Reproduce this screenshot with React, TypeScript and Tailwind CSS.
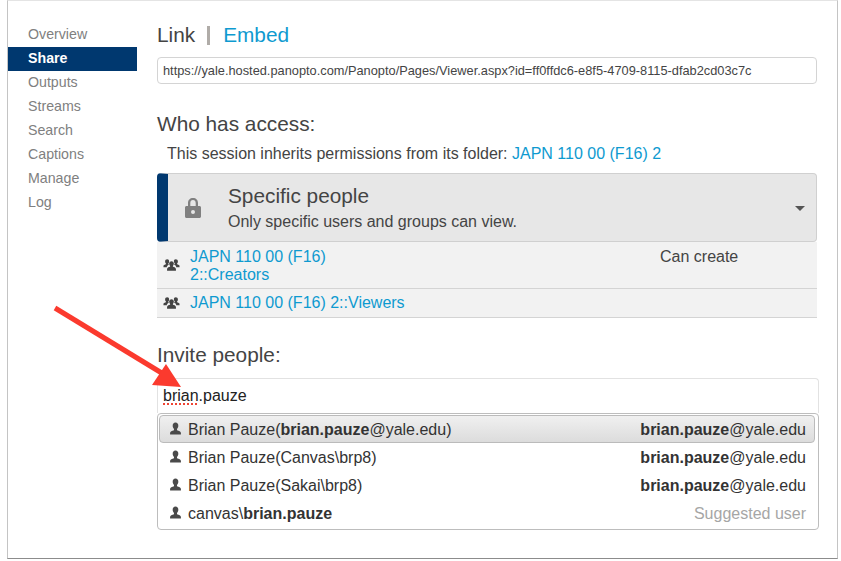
import React from 'react';

const navItems = ['Overview', 'Share', 'Outputs', 'Streams', 'Search', 'Captions', 'Manage', 'Log'];

const Person = () => (
  <svg viewBox="0 0 12 12" className="-mt-[2px] h-[13px] w-[13px] shrink-0 fill-[#4a4a4a]">
    <path d="M6 .5c1.700 0 2.600 1.200 2.600 2.900 0 1.300-.5 2.300-1.200 3v1.100c1.800.6 3.600 1.100 3.600 2.600v1.400H1V10.100c0-1.500 1.800-2 3.600-2.600V6.400c-.7-.7-1.200-1.700-1.200-3C3.400 1.700 4.300.5 6 .5z" />
  </svg>
);

const Group = () => (
  <svg viewBox="0 0 18 14" className="h-[14px] w-[17px] shrink-0 fill-[#444]">
    <path d="M4.500 1c1.300 0 2 .9 2 2.200 0 1-.4 1.700-.9 2.200v.8l.9.3C5 7.200 4 8 4 9.500H.5V8c0-1 1.300-1.400 2.600-1.800v-.8c-.5-.5-.9-1.200-.9-2.200C2.200 1.900 3.200 1 4.500 1zM13.500 1c1.300 0 2.300.9 2.300 2.200 0 1-.4 1.700-.9 2.200v.8c1.300.4 2.600.8 2.600 1.800v1.500H14c0-1.500-1-2.300-2.500-3.200l.9-.3v-.8c-.5-.5-.9-1.200-.9-2.200 0-1.300.7-2.200 2-2.200z" />
    <path d="M9 3c1.500 0 2.500 1 2.500 2.500 0 1.100-.4 1.900-1 2.500v.9c1.600.5 3.200 1 3.200 2.300V13H4.300v-1.800c0-1.300 1.600-1.800 3.200-2.300V8c-.6-.6-1-1.400-1-2.500C6.500 4 7.500 3 9 3z" />
  </svg>
);

const LockIcon = () => (
  <svg viewBox="0 0 16 20" className="ml-[17px] h-[20px] w-[16px] shrink-0">
    <path
      fillRule="evenodd"
      fill="#808080"
      d="M8 0c3 0 5 2 5 5v3h1.500c.8 0 1.500.7 1.500 1.500v9c0 .8-.7 1.500-1.500 1.500h-13C.7 20 0 19.300 0 18.500v-9C0 8.700.7 8 1.500 8H3V5c0-3 2-5 5-5zm0 2C6.300 2 5.300 3.300 5.300 5v3h5.400V5c0-1.700-1-3-2.700-3zM8 12a2 2 0 100 4 2 2 0 000-4z"
    />
  </svg>
);

const Suggestion = ({ name, right, active }: { name: React.ReactNode; right: React.ReactNode; active?: boolean }) => (
  <div
    className={`flex h-[28px] items-center justify-between pl-[9px] pr-[8px] pt-[1px] ${
      active ? 'rounded-[4px] border border-[#bbb] bg-gradient-to-b from-[#f0f0f0] to-[#dcdcdc]' : 'border border-transparent'
    }`}
  >
    <div className="flex items-center gap-[6px]">
      <Person />
      <span>{name}</span>
    </div>
    <span>{right}</span>
  </div>
);

const email = (
  <>
    <b>brian.pauze</b>@yale.edu
  </>
);

export default function App() {
  return (
    <div className="relative h-[561px] w-[841px] overflow-hidden bg-white font-['Liberation_Sans',Arial,sans-serif] text-[16px] text-[#444]">
      <div className="ml-[7px] flex h-[559px] w-[831px] border-x border-b border-t border-x-[#c4c4c4] border-b-[#8c8c8c] border-t-[#e4e4e4]">
        {/* sidebar */}
        <nav className="w-[129px] shrink-0 pt-[22px] text-[14.200px]">
          {navItems.map((item) => (
            <div
              key={item}
              className={`flex h-[24px] items-center pl-[20px] ${
                item === 'Share' ? 'bg-[#00386f] font-bold text-white' : 'text-[#808080]'
              }`}
            >
              {item}
            </div>
          ))}
        </nav>

        {/* main */}
        <main className="ml-[20px] w-[660px] pt-[22px]">
          <div className="flex h-[24px] items-center text-[20.800px] leading-none">
            <span className="text-[#444]">Link</span>
            <span className="ml-[12px] mr-[13px] h-[19px] w-[3px] bg-[#b0aca8]" />
            <span className="text-[#0e9ad0]">Embed</span>
          </div>

          <div className="mt-[10px] flex h-[27px] items-center rounded-[4px] border border-[#d4d4d4] px-[5px] text-[12.800px] text-[#444]">
            https://yale.hosted.panopto.com/Panopto/Pages/Viewer.aspx?id=ff0ffdc6-e8f5-4709-8115-dfab2cd03c7c
          </div>

          <h2 className="mt-[28px] text-[20.800px] leading-[24px] text-[#444]">Who has access:</h2>

          <p className="mt-[8px] pl-[10px] leading-[20px]">
            This session inherits permissions from its folder: <span className="text-[#0e9ad0]">JAPN 110 00 (F16) 2</span>
          </p>

          <div className="mt-[9px] flex h-[69px] items-center rounded-[4px] border border-[#d0d0d0] border-l-[11px] border-l-[#00386f] bg-[#e7e7e7]">
            <LockIcon />
            <div className="ml-[27px] flex-1">
              <div className="text-[20.800px] leading-[24px] text-[#444]">Specific people</div>
              <div className="mt-[4px] leading-[20px]">Only specific users and groups can view.</div>
            </div>
            <div className="mr-[11px] mt-[2px] h-0 w-0 border-x-[5px] border-t-[5px] border-x-transparent border-t-[#555]" />
          </div>

          <div className="flex h-[47px] border-b border-[#d4d4d4] bg-[#f2f2f2] pt-[6px]">
            <div className="ml-[6px] mt-[10px]">
              <Group />
            </div>
            <div className="ml-[10px] w-[160px] leading-[18px] text-[#0e9ad0]">
              JAPN 110 00 (F16)
              <br />
              2::Creators
            </div>
            <div className="ml-[310px] leading-[18px]">Can create</div>
          </div>
          <div className="flex h-[29px] items-center border-b border-[#d4d4d4] bg-[#f2f2f2]">
            <div className="ml-[6px]">
              <Group />
            </div>
            <div className="ml-[10px] text-[#0e9ad0]">JAPN 110 00 (F16) 2::Viewers</div>
          </div>

          <h2 className="mt-[25px] text-[20.800px] leading-[24px] text-[#444]">Invite people:</h2>

          <div className="mt-[11px] flex h-[35px] w-[662px] items-center rounded-t-[4px] border border-b-0 border-[#e2e2e2] px-[5px] text-[#222]">
            <span className="underline decoration-[#ee4433] decoration-dotted decoration-2 underline-offset-2">brian</span>
            .pauze
          </div>

          <div className="w-[662px] rounded-[4px] border border-[#bdbdbd] bg-white pb-[2px] pl-[1px] pr-[3px] pt-[1px] text-[#333]">
            <Suggestion
              active
              name={
                <>
                  Brian Pauze(<b>brian.pauze</b>@yale.edu)
                </>
              }
              right={email}
            />
            <Suggestion name="Brian Pauze(Canvas\brp8)" right={email} />
            <Suggestion name="Brian Pauze(Sakai\brp8)" right={email} />
            <Suggestion
              name={
                <>
                  canvas\<b>brian.pauze</b>
                </>
              }
              right={<span className="text-[#a6a6a6]">Suggested user</span>}
            />
          </div>
        </main>
      </div>

      {/* annotation arrow */}
      <svg className="pointer-events-none absolute left-0 top-0" width="841" height="561">
        <line x1="55" y1="308" x2="165" y2="375" stroke="#fb3a2e" strokeWidth="5" />
        <polygon points="166,364 181,387 152,385" fill="#fb3a2e" />
      </svg>
    </div>
  );
}
